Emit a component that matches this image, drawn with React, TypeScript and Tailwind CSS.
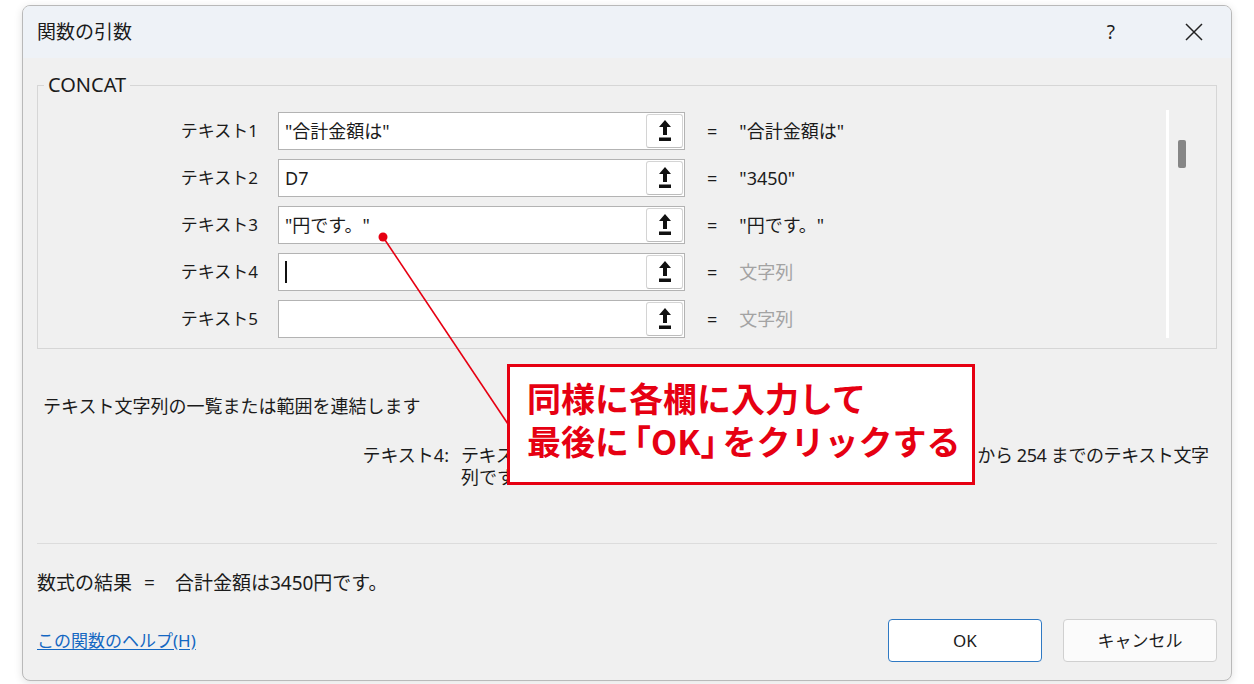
import React from 'react'

const rows = [
  { label: 'テキスト1', value: '"合計金額は"', result: '"合計金額は"', empty: false },
  { label: 'テキスト2', value: 'D7', result: '"3450"', empty: false },
  { label: 'テキスト3', value: '"円です。"', result: '"円です。"', empty: false },
  { label: 'テキスト4', value: '', result: '文字列', empty: true, caret: true },
  { label: 'テキスト5', value: '', result: '文字列', empty: true },
]

function RefIcon() {
  return (
    <svg width="14" height="22" viewBox="0 0 14 22">
      <path d="M7 0 L13 7 L9 7 L9 15 L5 15 L5 7 L1 7 Z" fill="#111" />
      <rect x="1" y="17.5" width="12" height="3.5" fill="#111" />
    </svg>
  )
}

export default function App() {
  return (
    <div className="relative w-[1254px] h-[684px] bg-white pt-[5px] pl-[22px] font-['Noto_Sans','Noto_Sans_CJK_JP',sans-serif] text-[#1b1b1b] overflow-hidden">
      <div className="w-[1210px] h-[676px] flex flex-col rounded-lg border border-[#b9b9b9] bg-[#f0f0f0] overflow-hidden shadow-[0_2px_8px_rgba(0,0,0,0.12)]">
        {/* Title bar */}
        <div className="h-[52px] shrink-0 flex items-center bg-[#eef2f7] pl-[14px] pr-[28px]">
          <span className="text-[19px]">関数の引数</span>
          <span className="ml-auto text-[19px] mr-[70px]">?</span>
          <svg width="18" height="18" viewBox="0 0 18 18">
            <path d="M1 1 L17 17 M17 1 L1 17" stroke="#222" strokeWidth="1.5" />
          </svg>
        </div>

        {/* Body */}
        <div className="flex-1 flex flex-col">
          <fieldset className="mt-[14px] mx-[14px] border border-[#d6d6d6] flex">
            <legend className="ml-[6px] px-[4px] text-[20px] leading-[26px]">CONCAT</legend>
            <div className="flex-1 flex flex-col gap-[9px] pt-[14px] pb-[10px]">
              {rows.map((r) => (
                <div key={r.label} className="flex items-center h-[38px]">
                  <div className="w-[220px] text-right text-[17px]">{r.label}</div>
                  <div className="ml-[20px] w-[407px] h-[38px] flex bg-white border border-[#b3b3b3]">
                    <div className="flex-1 flex items-center pl-[6px] text-[18px]">
                      {r.caret ? <span className="w-[1.5px] h-[22px] bg-[#111]" /> : r.value}
                    </div>
                    <div className="w-[37px] m-[1px] flex items-center justify-center rounded-[3px] border border-[#d4d4d4] border-b-[#bcbcbc] bg-white">
                      <RefIcon />
                    </div>
                  </div>
                  <div className="ml-[22px] text-[18px]">=</div>
                  <div className={`ml-[22px] text-[18px] ${r.empty ? 'text-[#a3a3a3]' : ''}`}>{r.result}</div>
                </div>
              ))}
            </div>
            {/* Scrollbar */}
            <div className="flex items-stretch pr-[30px] pt-[12px] pb-[10px]">
              <div className="w-[3px] bg-white" />
              <div className="ml-[9px] mt-[30px] w-[8px] h-[28px] rounded-[2px] bg-[#868686]" />
            </div>
          </fieldset>

          <div className="mt-[45px] pl-[20px] text-[18px] leading-[24px]">テキスト文字列の一覧または範囲を連結します</div>

          <div className="mt-[26px] flex text-[18px] leading-[22px]">
            <div className="w-[426px] text-right">テキスト4:</div>
            <div className="ml-[12px] whitespace-nowrap">
              <div className="tracking-[-0.4px]">テキスト1,テキスト2,...は結合するテキスト文字列または範囲を 1 から 254 までのテキスト文字</div>
              <div>列です。</div>
            </div>
          </div>

          <div className="mt-[55px] mx-[14px] border-t border-[#dcdcdc]" />

          <div className="mt-[27px] pl-[14px] flex items-center text-[19px] leading-[24px]">
            <span>数式の結果</span>
            <span className="ml-[12px]">=</span>
            <span className="ml-[20px]">合計金額は3450円です。</span>
          </div>

          <div className="mt-[24px] flex items-center pl-[14px] pr-[14px]">
            <a className="text-[17px] text-[#1467c2] underline underline-offset-2">この関数のヘルプ(H)</a>
            <button className="ml-auto w-[154px] h-[43px] rounded-[4px] border border-[#2f79c3] bg-white text-[17px]">OK</button>
            <button className="ml-[21px] w-[154px] h-[43px] rounded-[4px] border border-[#d0d0d0] bg-[#fbfbfb] text-[17px]">キャンセル</button>
          </div>
        </div>
      </div>

      {/* Annotation */}
      <svg className="absolute left-0 top-0 pointer-events-none" width="1254" height="684">
        <line x1="383" y1="237" x2="508" y2="424" stroke="#e60012" strokeWidth="1.6" />
        <circle cx="383" cy="237" r="4.5" fill="#e60012" />
      </svg>
      <div className="absolute left-[507px] top-[364px] w-[468px] h-[121px] border-[3px] border-[#e60012] bg-white pl-[17px] pt-[9px] text-[34px] leading-[43px] font-bold text-[#e60012] whitespace-nowrap font-['Noto_Sans_CJK_JP',sans-serif]">
        <div>同様に各欄に入力して</div>
        <div>
          最後に<span className="ml-[-12px]">「</span>OK<span className="mr-[-12px]">」</span>をクリックする
        </div>
      </div>
    </div>
  )
}
